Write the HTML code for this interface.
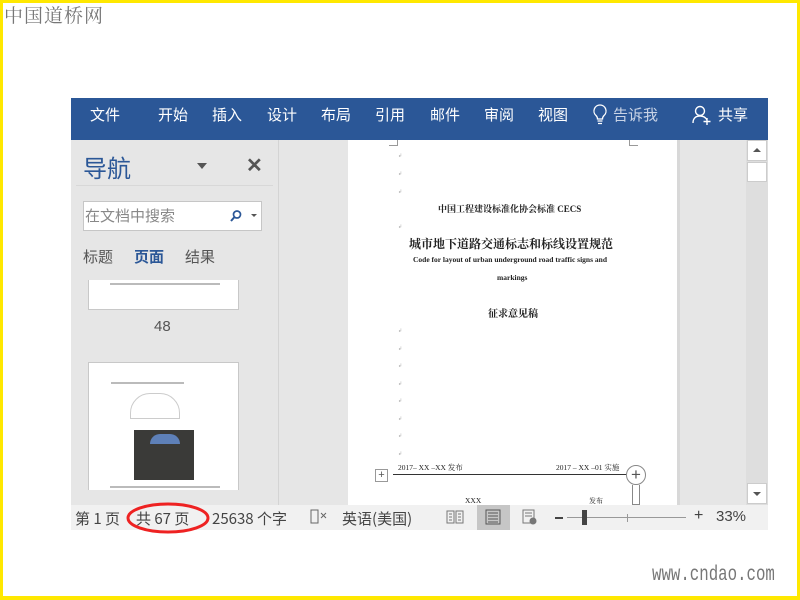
<!DOCTYPE html>
<html><head><meta charset="utf-8"><style>
*{margin:0;padding:0;box-sizing:border-box}
body{width:800px;height:600px;position:relative;overflow:hidden;background:#fff;font-family:"Liberation Sans","Noto Sans CJK SC",sans-serif}
.a{position:absolute}
.cj{font-family:"Noto Sans CJK SC",sans-serif}
.sr{font-family:"Liberation Serif","Noto Serif CJK SC",serif;font-weight:bold;color:#222}
.mk{position:absolute;left:398px;font-size:5px;color:#aaa}
.st{position:absolute;top:508px;font-size:15px;color:#444;white-space:nowrap;font-family:"Noto Sans CJK SC",sans-serif}
</style></head><body>
<div class="a" style="left:0;top:0;width:800px;height:3px;background:#ffe800"></div>
<div class="a" style="left:0;top:0;width:3px;height:600px;background:#ffe800"></div>
<div class="a" style="right:0;top:0;width:3px;height:600px;background:#ffe800"></div>
<div class="a" style="left:0;bottom:0;width:800px;height:4px;background:#ffe800"></div>
<div class="a cj" style="left:4px;top:1px;font-size:19px;color:#777;letter-spacing:1px;font-family:'Noto Serif CJK SC',serif">中国道桥网</div>

<!-- ribbon -->
<div class="a" style="left:71px;top:98px;width:697px;height:42px;background:#2b5797"></div>
<div class="a cj" style="top:104px;left:0;color:#fff;font-size:15px;width:800px;height:24px">
<span class="a" style="left:90px">文件</span><span class="a" style="left:158px">开始</span><span class="a" style="left:212px">插入</span><span class="a" style="left:267px">设计</span><span class="a" style="left:321px">布局</span><span class="a" style="left:375px">引用</span><span class="a" style="left:430px">邮件</span><span class="a" style="left:484px">审阅</span><span class="a" style="left:538px">视图</span><span class="a" style="left:613px;color:#c8d3e6">告诉我</span><span class="a" style="left:718px">共享</span>
</div>
<svg class="a" style="left:592px;top:103px" width="16" height="24"><path d="M8 2a6 6 0 0 0-4 10.5c1 1 1.5 2 1.5 3.5h5c0-1.5.5-2.5 1.5-3.5A6 6 0 0 0 8 2zM5.5 18h5M6 20.5h4" stroke="#fff" stroke-width="1.3" fill="none"/></svg>
<svg class="a" style="left:692px;top:104px" width="22" height="22"><circle cx="8" cy="7" r="4.5" stroke="#fff" stroke-width="1.4" fill="none"/><path d="M1 19c0-5 3-7 7-7s6 2 7 4M15 14v7M11.5 17.5h7" stroke="#fff" stroke-width="1.4" fill="none"/></svg>

<!-- nav pane -->
<div class="a" style="left:71px;top:140px;width:208px;height:365px;background:#e6e6e6"></div>
<div class="a" style="left:278px;top:140px;width:1px;height:365px;background:#d4d4d4"></div>
<div class="a cj" style="left:83px;top:149px;font-size:24px;color:#2b5797">导航</div>
<div class="a" style="left:197px;top:163px;border-left:5px solid transparent;border-right:5px solid transparent;border-top:6px solid #555"></div>
<div class="a" style="left:246px;top:153px;font-size:20px;color:#555;font-weight:bold">✕</div>
<div class="a" style="left:76px;top:185px;width:197px;height:1px;background:#d8d8d8"></div>
<div class="a" style="left:83px;top:201px;width:179px;height:30px;background:#fff;border:1px solid #c6c6c6"></div>
<div class="a cj" style="left:85px;top:205px;font-size:15px;color:#888">在文档中搜索</div>
<svg class="a" style="left:229px;top:209px" width="14" height="14"><circle cx="8" cy="5.5" r="3.5" stroke="#2b5797" stroke-width="1.7" fill="none"/><path d="M5.5 8L2 12" stroke="#2b5797" stroke-width="2"/></svg>
<div class="a" style="left:251px;top:214px;border-left:3px solid transparent;border-right:3px solid transparent;border-top:3px solid #555"></div>
<div class="a cj" style="left:83px;top:246px;font-size:15px;color:#555">标题</div>
<div class="a cj" style="left:134px;top:246px;font-size:15px;color:#2b5797;font-weight:bold">页面</div>
<div class="a cj" style="left:185px;top:246px;font-size:15px;color:#555">结果</div>
<div class="a" style="left:88px;top:280px;width:151px;height:30px;background:#fff;border:1px solid #c8c8c8;border-top:none"></div>
<div class="a" style="left:110px;top:283px;width:110px;height:2px;background:#bbb"></div>
<div class="a" style="left:154px;top:318px;font-size:15px;color:#555">48</div>
<div class="a" style="left:88px;top:362px;width:151px;height:128px;background:#fff;border:1px solid #c8c8c8;border-bottom:none"></div>
<div class="a" style="left:111px;top:382px;width:73px;height:2px;background:#bbb"></div>
<div class="a" style="left:130px;top:393px;width:50px;height:26px;border:1px solid #ccc;border-radius:20px 20px 0 0"></div>
<div class="a" style="left:134px;top:430px;width:60px;height:50px;background:#3a3a38"></div>
<div class="a" style="left:150px;top:434px;width:30px;height:10px;background:#5e80b8;border-radius:10px 10px 0 0"></div>
<div class="a" style="left:110px;top:486px;width:110px;height:2px;background:#bbb"></div>

<!-- doc area -->
<div class="a" style="left:279px;top:140px;width:467px;height:365px;background:#e6e6e6"></div>
<div class="a" style="left:348px;top:140px;width:329px;height:365px;background:#fff"></div>
<div class="a" style="left:677px;top:140px;width:3px;height:365px;background:#d8d8d8"></div>
<div class="a" style="left:389px;top:140px;width:9px;height:6px;border-right:1px solid #999;border-bottom:1px solid #999"></div>
<div class="a" style="left:629px;top:140px;width:9px;height:6px;border-left:1px solid #999;border-bottom:1px solid #999"></div>
<div class="mk" style="top:153px">↲</div><div class="mk" style="top:171px">↲</div><div class="mk" style="top:189px">↲</div><div class="mk" style="top:224px">↲</div>
<div class="mk" style="top:328px">↲</div><div class="mk" style="top:346px">↲</div><div class="mk" style="top:363px">↲</div><div class="mk" style="top:381px">↲</div><div class="mk" style="top:398px">↲</div><div class="mk" style="top:416px">↲</div><div class="mk" style="top:433px">↲</div><div class="mk" style="top:451px">↲</div>
<div class="a sr" style="left:438px;top:202px;font-size:9px">中国工程建设标准化协会标准 CECS</div>
<div class="a sr" style="left:409px;top:235px;font-size:12px">城市地下道路交通标志和标线设置规范</div>
<div class="a sr" style="left:413px;top:255px;font-size:7.5px">Code for layout of urban underground road traffic signs and</div>
<div class="a sr" style="left:497px;top:273px;font-size:7.5px">markings</div>
<div class="a sr" style="left:488px;top:305px;font-size:10px">征求意见稿</div>
<div class="a sr" style="left:398px;top:462px;font-size:7.5px;font-weight:normal">2017– XX –XX 发布</div>
<div class="a sr" style="left:556px;top:462px;font-size:7.5px;font-weight:normal">2017 – XX –01 实施</div>
<div class="a" style="left:393px;top:474px;width:236px;height:1px;background:#333"></div>
<div class="a" style="left:375px;top:469px;width:13px;height:13px;border:1px solid #999;background:#fff;font-size:11px;line-height:11px;text-align:center;color:#555">+</div>
<div class="a" style="left:626px;top:465px;width:20px;height:20px;border:1px solid #888;border-radius:50%;background:#fff;font-size:17px;line-height:17px;text-align:center;color:#555">+</div>
<div class="a" style="left:632px;top:485px;width:8px;height:20px;border:1px solid #888;border-top:none"></div>
<div class="a sr" style="left:465px;top:496px;font-size:7.5px;font-weight:normal">XXX</div>
<div class="a sr" style="left:589px;top:496px;font-size:7px;font-weight:normal">发布</div>

<!-- scrollbar -->
<div class="a" style="left:746px;top:140px;width:22px;height:365px;background:#dedede"></div>
<div class="a" style="left:747px;top:140px;width:20px;height:21px;background:#fff;border:1px solid #ccc"></div>
<div class="a" style="left:753px;top:148px;border-left:4px solid transparent;border-right:4px solid transparent;border-bottom:4px solid #555"></div>
<div class="a" style="left:747px;top:162px;width:20px;height:20px;background:#fff;border:1px solid #ccc"></div>
<div class="a" style="left:747px;top:483px;width:20px;height:21px;background:#fff;border:1px solid #ccc"></div>
<div class="a" style="left:753px;top:492px;border-left:4px solid transparent;border-right:4px solid transparent;border-top:4px solid #555"></div>

<!-- status -->
<div class="a" style="left:71px;top:505px;width:697px;height:25px;background:#f1f1f1"></div>
<div class="a" style="left:477px;top:505px;width:33px;height:25px;background:#c6c6c6"></div>
<div class="st" style="left:75px">第 1 页</div>
<div class="st" style="left:136px">共 67 页</div>
<div class="st" style="left:212px">25638 个字</div>
<div class="st" style="left:342px">英语(美国)</div>
<svg class="a" style="left:310px;top:509px" width="18" height="16"><rect x="1" y="1" width="7" height="13" fill="none" stroke="#666"/><path d="M11 4l5 5M16 4l-5 5" stroke="#666"/></svg>
<svg class="a" style="left:446px;top:509px" width="18" height="16"><path d="M1 2h7v12H1zM10 2h7v12h-7zM3 5h3M3 8h3M3 11h3M12 5h3M12 8h3M12 11h3" stroke="#777" fill="none"/></svg>
<svg class="a" style="left:484px;top:509px" width="18" height="16"><path d="M2 1h14v14H2zM4 4h10M4 7h10M4 10h10M4 13h10" stroke="#555" fill="none"/></svg>
<svg class="a" style="left:521px;top:509px" width="18" height="16"><path d="M2 1h11v13H2zM4 4h7M4 7h7" stroke="#777" fill="none"/><circle cx="12" cy="12" r="3.5" fill="#777"/></svg>
<div class="a" style="left:555px;top:517px;width:8px;height:2px;background:#444"></div>
<div class="a" style="left:567px;top:517px;width:119px;height:1px;background:#999"></div>
<div class="a" style="left:582px;top:510px;width:5px;height:15px;background:#444"></div>
<div class="a" style="left:627px;top:514px;width:1px;height:8px;background:#999"></div>
<div class="a" style="left:694px;top:507px;font-size:16px;color:#444">+</div>
<div class="a" style="left:716px;top:508px;font-size:15px;color:#444">33%</div>
<svg class="a" style="left:124px;top:500px" width="96" height="40"><ellipse cx="44" cy="18" rx="40" ry="14" fill="none" stroke="#e22" stroke-width="3"/></svg>
<div class="a" style="left:652px;top:564px;font-size:21px;color:#777;font-family:'Liberation Mono',monospace;transform:scaleX(.75);transform-origin:left">www.cndao.com</div>
</body></html>
